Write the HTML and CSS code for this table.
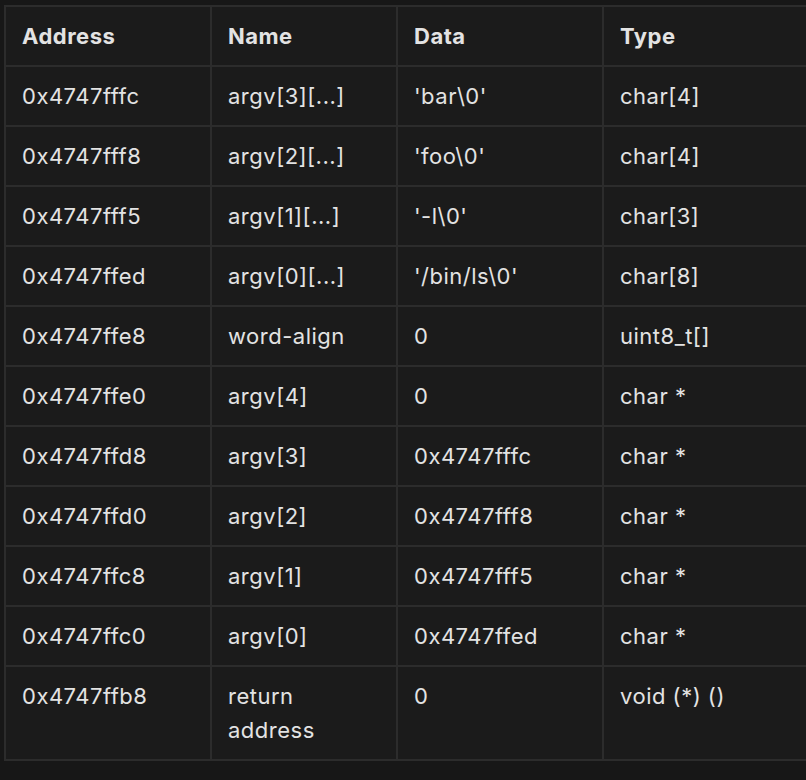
FILE: index.html
```html
<!DOCTYPE html>
<html>
<head>
<meta charset="utf-8">
<link rel="stylesheet" href="styles.css">
</head>
<body>
<div class="wrap">
<table class="mem">
<colgroup><col class="c1"><col class="c2"><col class="c3"><col class="c4"></colgroup>
<thead>
<tr><th>Address</th><th>Name</th><th>Data</th><th>Type</th></tr>
</thead>
<tbody>
<tr><td>0x4747fffc</td><td>argv[3][...]</td><td>'bar\0'</td><td>char[4]</td></tr>
<tr><td>0x4747fff8</td><td>argv[2][...]</td><td>'foo\0'</td><td>char[4]</td></tr>
<tr><td>0x4747fff5</td><td>argv[1][...]</td><td>'-l\0'</td><td>char[3]</td></tr>
<tr><td>0x4747ffed</td><td>argv[0][...]</td><td>'/bin/ls\0'</td><td>char[8]</td></tr>
<tr><td>0x4747ffe8</td><td>word-align</td><td>0</td><td>uint8_t[]</td></tr>
<tr><td>0x4747ffe0</td><td>argv[4]</td><td>0</td><td>char *</td></tr>
<tr><td>0x4747ffd8</td><td>argv[3]</td><td>0x4747fffc</td><td>char *</td></tr>
<tr><td>0x4747ffd0</td><td>argv[2]</td><td>0x4747fff8</td><td>char *</td></tr>
<tr><td>0x4747ffc8</td><td>argv[1]</td><td>0x4747fff5</td><td>char *</td></tr>
<tr><td>0x4747ffc0</td><td>argv[0]</td><td>0x4747ffed</td><td>char *</td></tr>
<tr><td>0x4747ffb8</td><td>return<br>address</td><td>0</td><td>void (*) ()</td></tr>
</tbody>
</table>
</div>
</body>
</html>
```
FILE: styles.css
```css
html, body {
  margin: 0;
  padding: 0;
  background: #171717;
  overflow: hidden;
}
.wrap {
  padding: 5px 0 0 4px;
  width: 830px;
}
.mem {
  border-collapse: collapse;
  table-layout: fixed;
  width: 810px;
  background: #1b1b1b;
  color: #e3e3e3;
  font-family: Inter, "Noto Sans", sans-serif;
  font-size: 22px;
  letter-spacing: 0.5px;
  line-height: 34px;
}
.c1 { width: 206px; }
.c2 { width: 186px; }
.c3 { width: 206px; }
.c4 { width: 212px; }
.mem th, .mem td {
  border: 2px solid #2c2c2c;
  padding: 12px 16px 12px 16px;
  text-align: left;
  vertical-align: top;
}
.mem th {
  font-weight: 700;
}
.mem td {
  font-weight: 400;
}
```
